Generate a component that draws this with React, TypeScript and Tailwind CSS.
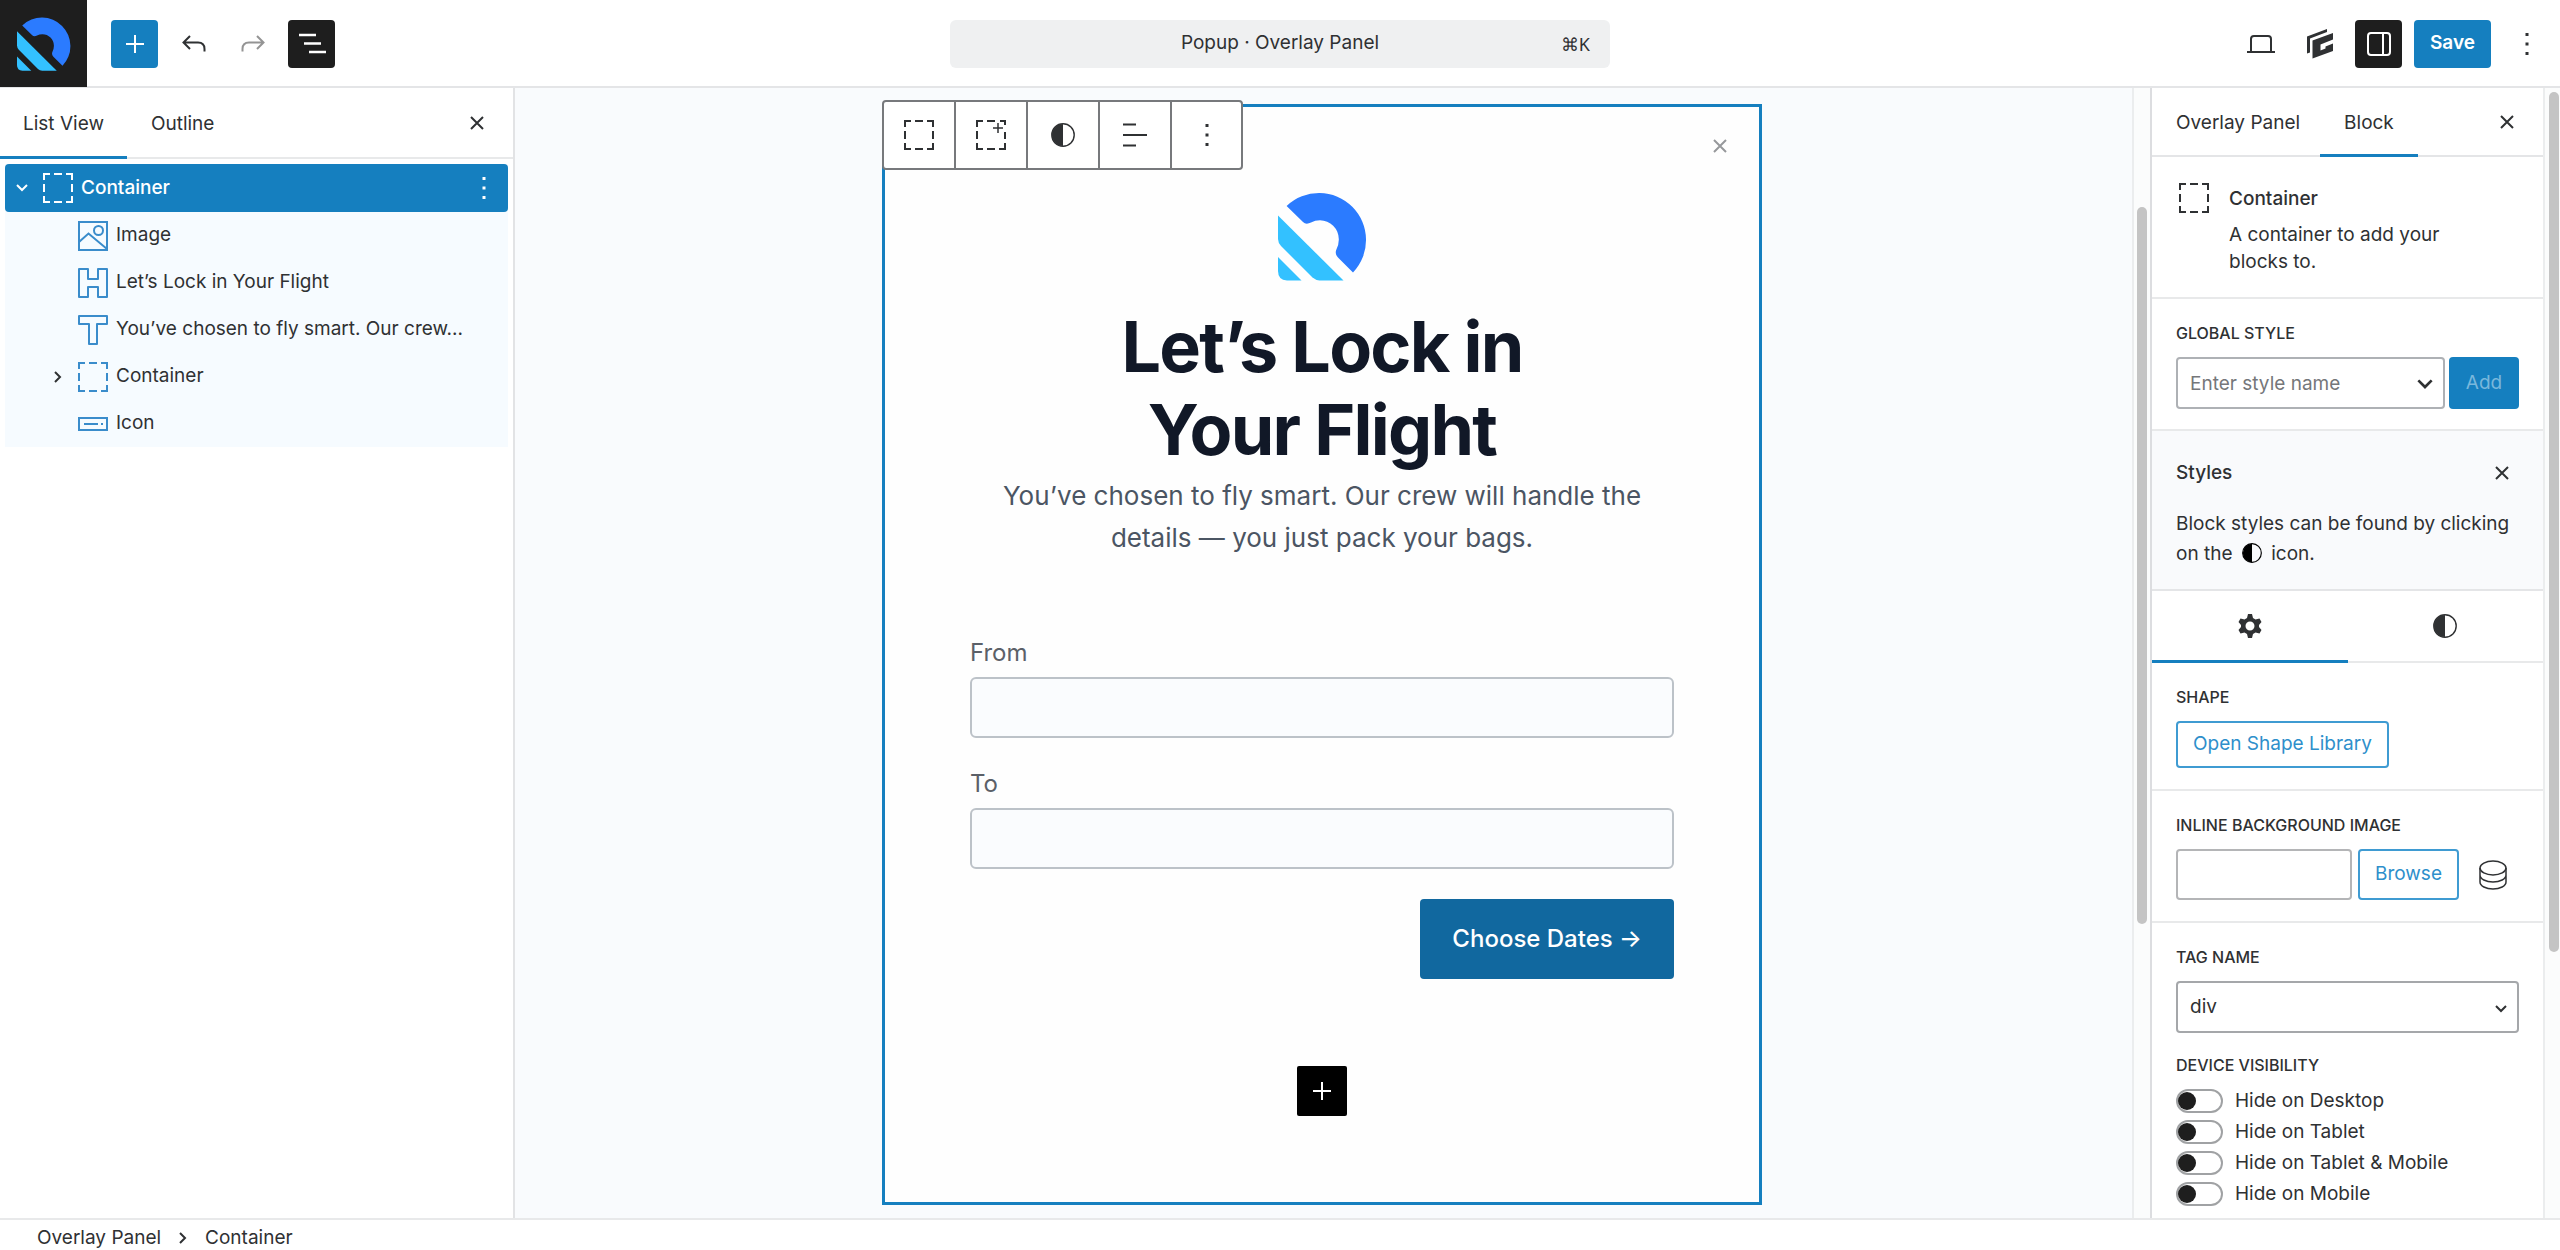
import { useState, type ReactNode } from "react";

const DASHES = "M1 7V1H7M11 1H19M23 1H29V7M29 11V19M29 23V29H23M19 29H11M7 29H1V23M1 19V11";

const ContainerIcon = ({ className = "size-[30px]" }: { className?: string }) => (
  <svg viewBox="0 0 30 30" className={className} fill="none" stroke="currentColor" strokeWidth="2">
    <path d={DASHES} />
  </svg>
);

const AddContainerIcon = () => (
  <svg viewBox="0 0 30 30" className="size-[30px]" fill="none" stroke="currentColor" strokeWidth="2">
    <path d="M1 7V1H7M11 1H19M24 1H29V5M29 12V19M29 23V29H23M19 29H11M7 29H1V23M1 19V11" />
    <path d="M22 3V13M17 8H27" strokeWidth="1.5" />
  </svg>
);

const ImageIcon = () => (
  <svg viewBox="0 0 30 30" className="size-[30px]" fill="none" stroke="currentColor" strokeWidth="2">
    <path d="M1 1H29V29H1Z" />
    <circle cx="20.5" cy="9.5" r="4.5" />
    <path d="M1 21L10.5 12.5L29 28" />
  </svg>
);

const HeadingIcon = () => (
  <svg viewBox="0 0 30 30" className="size-[30px]" fill="none" stroke="currentColor" strokeWidth="2">
    <path d="M1 1H10V11H20V1H29V29H20V19H10V29H1Z" strokeLinejoin="round" />
  </svg>
);

const TextIcon = () => (
  <svg viewBox="0 0 30 30" className="size-[30px]" fill="none" stroke="currentColor" strokeWidth="2">
    <path d="M1 1H29V9H19V29H11V9H1Z" strokeLinejoin="round" />
  </svg>
);

const ButtonIcon = () => (
  <svg viewBox="0 0 30 30" className="size-[30px]" fill="none" stroke="currentColor" strokeWidth="2">
    <path d="M1 9H29V21H1ZM6 15H20M23 15H25" />
  </svg>
);

const Logo = ({ className }: { className: string }) => (
  <svg viewBox="0 0 89 89" className={className}>
    <path
      fill="#2b7bff"
      d="M8.6 14A47 47 0 0 1 75 80.5L60 65.5Q57 62.5 58 58.5Q61 53 60.8 47A19 19 0 0 0 42 28.3Q37 28.3 33 30.5Q28 33 25 30Z"
    />
    <path fill="#33c1ff" d="M0 23.5L65.5 88.5H41.5Q37.5 88 34.5 85.5L3 54Q0 50.5 0 47Z" />
    <path fill="#33c1ff" d="M0 65L23.5 88.5H9Q0 88 0 79Z" />
  </svg>
);

const HalfCircle = ({ className = "size-6" }: { className?: string }) => (
  <svg viewBox="0 0 24 24" className={className}>
    <circle cx="12" cy="12" r="11.2" fill="none" stroke="currentColor" strokeWidth="1.4" />
    <path d="M12 1A11 11 0 0 0 12 23Z" fill="currentColor" />
  </svg>
);

const CloseIcon = () => (
  <svg viewBox="0 0 14 14" className="size-3.5" fill="none" stroke="currentColor" strokeWidth="2">
    <path d="M1 1L13 13M13 1L1 13" />
  </svg>
);

const Kebab = () => (
  <svg viewBox="0 0 4 24" className="h-6 w-1" fill="currentColor">
    <path d="M0.5 1H3.5V4H0.5ZM0.5 10.5H3.5V13.5H0.5ZM0.5 20H3.5V23H0.5Z" />
  </svg>
);

const Chevron = ({ className = "w-3" }: { className?: string }) => (
  <svg viewBox="0 0 12 8" className={className} fill="none" stroke="currentColor" strokeWidth="2">
    <path d="M1 1L6 6L11 1" />
  </svg>
);

const PlusIcon = () => (
  <svg viewBox="0 0 18 18" className="size-[18px]" fill="none" stroke="currentColor" strokeWidth="2">
    <path d="M9 0V18M0 9H18" />
  </svg>
);

const UndoIcon = ({ className = "" }: { className?: string }) => (
  <svg viewBox="0 0 24 18" className={`w-6 ${className}`} fill="none" stroke="currentColor" strokeWidth="2">
    <path d="M8 1L1.5 7.5L8 14M2 7.5H16Q22.5 7.5 22.5 14V16.5" />
  </svg>
);

const IconButton = ({ label, className = "", children }: { label: string; className?: string; children: ReactNode }) => (
  <button
    type="button"
    aria-label={label}
    className={`flex shrink-0 cursor-pointer items-center justify-center ${className}`}
  >
    {children}
  </button>
);

const TopBar = () => (
  <header className="grid h-[88px] shrink-0 grid-cols-[1fr_660px_1fr] items-center border-b-2 border-[#e4e5e7] bg-white">
    <div className="flex items-center">
      <a href="#" aria-label="View posts" className="flex h-[87px] w-[87px] items-center justify-center bg-[#1e1e1e]">
        <Logo className="size-[54px]" />
      </a>
      <div className="ml-6 flex items-center gap-3">
        <IconButton label="Block inserter" className="h-12 w-[47px] rounded-sm bg-[#157fbf] text-white">
          <PlusIcon />
        </IconButton>
        <IconButton label="Undo" className="h-12 w-[47px]">
          <UndoIcon />
        </IconButton>
        <IconButton label="Redo" className="h-12 w-[47px] text-[#949494]">
          <UndoIcon className="-scale-x-100" />
        </IconButton>
        <IconButton label="Document overview" className="h-12 w-[47px] rounded-sm bg-[#1e1e1e] text-white">
          <svg viewBox="0 0 28 22" className="w-7" fill="none" stroke="currentColor" strokeWidth="2.5">
            <path d="M1 2H18M6 10.5H23M11 19H28" />
          </svg>
        </IconButton>
      </div>
    </div>
    <button type="button" className="grid h-12 cursor-pointer grid-cols-[1fr_auto_1fr] items-center rounded-md bg-[#eff0f1] px-5">
      <span className="col-start-2">Popup · Overlay Panel</span>
      <kbd className="justify-self-end font-sans text-lg">⌘K</kbd>
    </button>
    <div className="flex items-center justify-end gap-3 pr-2.5">
      <IconButton label="View" className="h-12 w-[47px]">
        <svg viewBox="0 0 28 18" className="w-7" fill="none" stroke="currentColor" strokeWidth="2">
          <path d="M4 16V4Q4 1 7 1H21Q24 1 24 4V16M0 17H28" />
        </svg>
      </IconButton>
      <IconButton label="GenerateBlocks" className="h-12 w-[47px]">
        <svg viewBox="0 0 26 30" className="w-[26px]" fill="currentColor">
          <path d="M0 24.5V7.5L20 0V3L3 9.5V23.5Z" />
          <path d="M5.5 29.5V11.5L26 4V10.5L13.5 15.5V21.5L18.5 19.5V17.5L26 14.5V22Z" />
        </svg>
      </IconButton>
      <IconButton label="Settings" className="h-12 w-[47px] rounded-sm bg-[#1e1e1e] text-white">
        <svg viewBox="0 0 24 24" className="w-6" fill="none" stroke="currentColor" strokeWidth="2">
          <rect x="1" y="1" width="22" height="22" rx="3" />
          <path d="M16 1V23" />
        </svg>
      </IconButton>
      <button type="button" className="h-12 w-[77px] cursor-pointer rounded-sm bg-[#157fbf] font-semibold text-white">
        Save
      </button>
      <IconButton label="Options" className="h-12 w-[47px]">
        <Kebab />
      </IconButton>
    </div>
  </header>
);

const blocks = [
  { name: "Image", icon: <ImageIcon /> },
  { name: "Let’s Lock in Your Flight", icon: <HeadingIcon /> },
  { name: "You’ve chosen to fly smart. Our crew...", icon: <TextIcon /> },
  { name: "Container", icon: <ContainerIcon />, nested: true },
  { name: "Icon", icon: <ButtonIcon /> },
];

const ListView = () => (
  <aside className="flex w-[515px] shrink-0 flex-col border-r-2 border-[#e2e3e5] bg-white">
    <div className="flex h-[71px] items-stretch border-b-2 border-[#e8e9ea]">
      <button type="button" className="-mb-0.5 cursor-pointer border-b-3 border-[#157fbf] px-[23px] pt-1">List View</button>
      <button type="button" className="cursor-pointer px-6 pt-1">Outline</button>
      <IconButton label="Close" className="mr-3 ml-auto size-12 self-center">
        <CloseIcon />
      </IconButton>
    </div>
    <div className="mx-[5px] mt-[5px] bg-[#f6fbff]">
      <div className="flex h-12 items-center rounded-sm bg-[#157fbf] text-white">
        <button type="button" aria-label="Collapse" className="flex w-[38px] cursor-pointer justify-center pr-1">
          <Chevron />
        </button>
        <ContainerIcon />
        <span className="ml-2 font-medium">Container</span>
        <IconButton label="Options" className="mr-1 ml-auto size-10">
          <Kebab />
        </IconButton>
      </div>
      <ul>
        {blocks.map((block) => (
          <li key={block.name} className="flex h-[47px] items-center">
            <span className="flex w-[73px] justify-end pr-3.5">
              {block.nested && (
                <button type="button" aria-label="Expand" className="cursor-pointer">
                  <Chevron className="w-3 -rotate-90" />
                </button>
              )}
            </span>
            <span className="text-[#3a8ccb]">{block.icon}</span>
            <a href="#" className="ml-2 truncate">{block.name}</a>
          </li>
        ))}
      </ul>
    </div>
  </aside>
);

const toolbar = [
  { label: "Container", icon: <ContainerIcon /> },
  { label: "Add inner container", icon: <AddContainerIcon /> },
  { label: "Styles", icon: <HalfCircle /> },
  {
    label: "Align",
    icon: (
      <svg viewBox="0 0 24 24" className="size-6" fill="none" stroke="currentColor" strokeWidth="2">
        <path d="M0 1.5H13M0 12H24M0 22.5H13" />
      </svg>
    ),
  },
  { label: "Options", icon: <Kebab /> },
];

const FlightField = ({ id, label }: { id: string; label: string }) => (
  <div className="flex flex-col">
    <label htmlFor={id} className="mb-1.5 text-2xl leading-9 text-[#5b6068]">{label}</label>
    <input id={id} type="text" className="h-[61px] rounded-md border-2 border-[#bcc2c8] bg-[#fafcfe] px-4" />
  </div>
);

const Canvas = () => (
  <main className="flex min-w-0 flex-1 bg-[#f9fbfd]">
    <div className="flex min-w-0 flex-1 justify-center py-4 pr-[3px]">
      <section className="relative flex h-[1101px] w-[880px] flex-col items-center border-3 border-[#157fbf] bg-[#fefefe] px-[85px] pt-[85px]">
        <div className="absolute -top-[7px] -left-[3px] flex rounded-sm border-2 border-[#77797c] bg-white">
          {toolbar.map((item) => (
            <IconButton
              key={item.label}
              label={item.label}
              className="h-[66px] w-[72px] border-r-2 border-[#77797c] last:w-[69px] last:border-r-0"
            >
              {item.icon}
            </IconButton>
          ))}
        </div>
        <button type="button" aria-label="Close" className="absolute top-8 right-8 cursor-pointer text-[#96989b]">
          <CloseIcon />
        </button>
        <Logo className="size-[89px]" />
        <h1 className="mt-6 w-[480px] text-center text-[70px] leading-[83px] font-bold tracking-tight text-[#111827]">
          Let’s Lock in Your Flight
        </h1>
        <p className="mt-1 w-[660px] text-center text-[26px] leading-[42px] text-[#4b5563]">
          You’ve chosen to fly smart. Our crew will handle the details — you just pack your bags.
        </p>
        <form className="mt-[76px] flex w-full flex-col gap-7">
          <FlightField id="from" label="From" />
          <FlightField id="to" label="To" />
          <button
            type="button"
            className="mt-0.5 h-20 cursor-pointer self-end rounded-sm bg-[#11689f] px-8 text-2xl font-medium text-white"
          >
            Choose Dates →
          </button>
        </form>
        <IconButton label="Add block" className="mt-[87px] size-[50px] rounded-xs bg-black text-white">
          <PlusIcon />
        </IconButton>
      </section>
    </div>
    <div className="w-[18px] border-l-2 border-[#ebedee] bg-[#fbfcfc] px-[3px] pt-[119px]">
      <div className="h-[717px] rounded-full bg-[#c4c4c4]" />
    </div>
  </main>
);

const PanelLabel = ({ htmlFor, children }: { htmlFor?: string; children: ReactNode }) => (
  <label htmlFor={htmlFor} className="block text-base leading-6 font-medium uppercase">{children}</label>
);

const visibility = ["Hide on Desktop", "Hide on Tablet", "Hide on Tablet & Mobile", "Hide on Mobile"];

const Toggle = ({ label }: { label: string }) => {
  const [on, setOn] = useState(false);

  return (
    <label className="flex cursor-pointer items-center gap-3 leading-6">
      <input
        type="checkbox"
        role="switch"
        checked={on}
        onChange={() => setOn(!on)}
        className="flex h-6 w-[47px] appearance-none items-center rounded-full border-2 border-[#a0a2a4] bg-white before:size-[18px] before:rounded-full before:bg-[#1e1e1e] checked:justify-end"
      />
      {label}
    </label>
  );
};

const Settings = () => (
  <aside className="flex w-[410px] shrink-0 border-l-2 border-[#dcdde0] bg-white">
    <div className="min-w-0 flex-1 overflow-hidden">
      <div className="flex h-[69px] items-stretch border-b-2 border-[#e4e5e7]">
        <button type="button" className="cursor-pointer pt-1 pr-5 pl-6">Overlay Panel</button>
        <button type="button" className="-mb-0.5 cursor-pointer border-b-3 border-[#157fbf] px-6 pt-1">Block</button>
        <IconButton label="Close settings" className="mr-3 ml-auto size-12 self-center">
          <CloseIcon />
        </IconButton>
      </div>

      <div className="flex h-[142px] gap-5 border-b-2 border-[#e8e9ea] pt-[26px] pl-[27px]">
        <ContainerIcon className="size-[30px] shrink-0" />
        <div className="pt-1">
          <h2 className="leading-6 font-medium">Container</h2>
          <p className="mt-2.5 w-[230px] leading-[27px]">A container to add your blocks to.</p>
        </div>
      </div>

      <div className="h-[132px] border-b-2 border-[#e8e9ea] px-6 pt-[22px]">
        <PanelLabel htmlFor="style-name">Global Style</PanelLabel>
        <div className="mt-3 flex gap-1">
          <div className="relative min-w-0 flex-1">
            <input
              id="style-name"
              type="text"
              placeholder="Enter style name"
              className="h-[52px] w-full rounded-sm border-2 border-[#aeb1b5] pl-3 placeholder:text-[#75777a]"
            />
            <Chevron className="pointer-events-none absolute top-[22px] right-3 w-4" />
          </div>
          <button type="button" className="h-[52px] w-[70px] cursor-pointer rounded-sm bg-[#157fbf] text-[#79b7dc]">Add</button>
        </div>
      </div>

      <div className="h-40 border-b-2 border-[#e4e5e7] bg-[#f9fafc] px-6 pt-[30px]">
        <div className="flex items-center justify-between pr-2.5">
          <h2 className="leading-6 font-medium">Styles</h2>
          <button type="button" aria-label="Dismiss" className="cursor-pointer">
            <CloseIcon />
          </button>
        </div>
        <p className="mt-6 leading-[30px]">
          Block styles can be found by clicking on the <HalfCircle className="mx-1 inline size-5 align-[-3px] text-black" /> icon.
        </p>
      </div>

      <div className="grid h-[72px] grid-cols-2 border-b-2 border-[#e8e9ea]">
        <IconButton label="Settings tab" className="-mb-0.5 border-b-3 border-[#157fbf]">
          <svg viewBox="0 0 24 24" className="size-6" fill="currentColor" fillRule="evenodd">
            <path d="M10 0H14L15 4L17.5 5.5L21.5 4.5L23.5 8L21 11V13L23.5 16L21.5 19.5L17.5 18.5L15 20L14 24H10L9 20L6.5 18.5L2.5 19.5L0.5 16L3 13V11L0.5 8L2.5 4.5L6.5 5.5L9 4ZM12 7.5A4.5 4.5 0 1 0 12 16.5A4.5 4.5 0 1 0 12 7.5Z" />
          </svg>
        </IconButton>
        <IconButton label="Styles tab">
          <HalfCircle />
        </IconButton>
      </div>

      <div className="h-32 border-b-2 border-[#e8e9ea] px-6 pt-[22px]">
        <h2 className="text-base leading-6 font-medium uppercase">Shape</h2>
        <button
          type="button"
          className="mt-3 h-[47px] cursor-pointer rounded-sm border-2 border-[#3f9bd2] px-[15px] text-[#2e8fcb]"
        >
          Open Shape Library
        </button>
      </div>

      <div className="h-[132px] border-b-2 border-[#e8e9ea] px-6 pt-[22px]">
        <PanelLabel htmlFor="background">Inline Background Image</PanelLabel>
        <div className="mt-3 flex items-center">
          <input id="background" type="text" className="h-[51px] min-w-0 flex-1 rounded-sm border-2 border-[#b4b5b7] px-3" />
          <button type="button" className="ml-1.5 h-[51px] w-[101px] cursor-pointer rounded-sm border-2 border-[#3f9bd2] text-[#2e8fcb]">
            Browse
          </button>
          <IconButton label="Dynamic data" className="mr-0.5 ml-2.5 size-12">
            <svg viewBox="0 0 28 30" className="w-7" fill="none" stroke="currentColor" strokeWidth="1.5">
              <ellipse cx="14" cy="8" rx="13" ry="7" />
              <path d="M1 8V22C1 26 7 29 14 29S27 26 27 22V8M1 15C1 19 7 22 14 22S27 19 27 15" />
            </svg>
          </IconButton>
        </div>
      </div>

      <div className="px-6 pt-[22px]">
        <PanelLabel htmlFor="tag-name">Tag Name</PanelLabel>
        <div className="relative mt-3">
          <select id="tag-name" className="h-[52px] w-full appearance-none rounded-sm border-2 border-[#a5a7aa] bg-white pl-3">
            <option>div</option>
            <option>section</option>
            <option>article</option>
          </select>
          <Chevron className="pointer-events-none absolute top-6 right-3 w-3" />
        </div>
        <fieldset className="mt-5">
          <legend className="text-base leading-6 font-medium uppercase">Device Visibility</legend>
          <div className="mt-3 flex flex-col gap-[7px]">
            {visibility.map((label) => (
              <Toggle key={label} label={label} />
            ))}
          </div>
        </fieldset>
      </div>
    </div>
    <div className="w-[17px] border-l-2 border-[#ebedee] bg-[#fbfcfc] pt-1 pl-1">
      <div className="h-[860px] w-2.5 rounded-full bg-[#c4c4c4]" />
    </div>
  </aside>
);

const Breadcrumb = () => (
  <footer className="flex h-8 shrink-0 items-center gap-4 border-t-2 border-[#e8e9ea] bg-white pt-1.5 pl-[37px]">
    <a href="#">Overlay Panel</a>
    <Chevron className="w-3 -rotate-90" />
    <a href="#">Container</a>
  </footer>
);

export default function App() {
  return (
    <div className="flex h-screen flex-col overflow-hidden bg-white font-['Inter',sans-serif] text-[19px] text-[#2f3133]">
      <TopBar />
      <div className="flex min-h-0 flex-1">
        <ListView />
        <Canvas />
        <Settings />
      </div>
      <Breadcrumb />
    </div>
  );
}
